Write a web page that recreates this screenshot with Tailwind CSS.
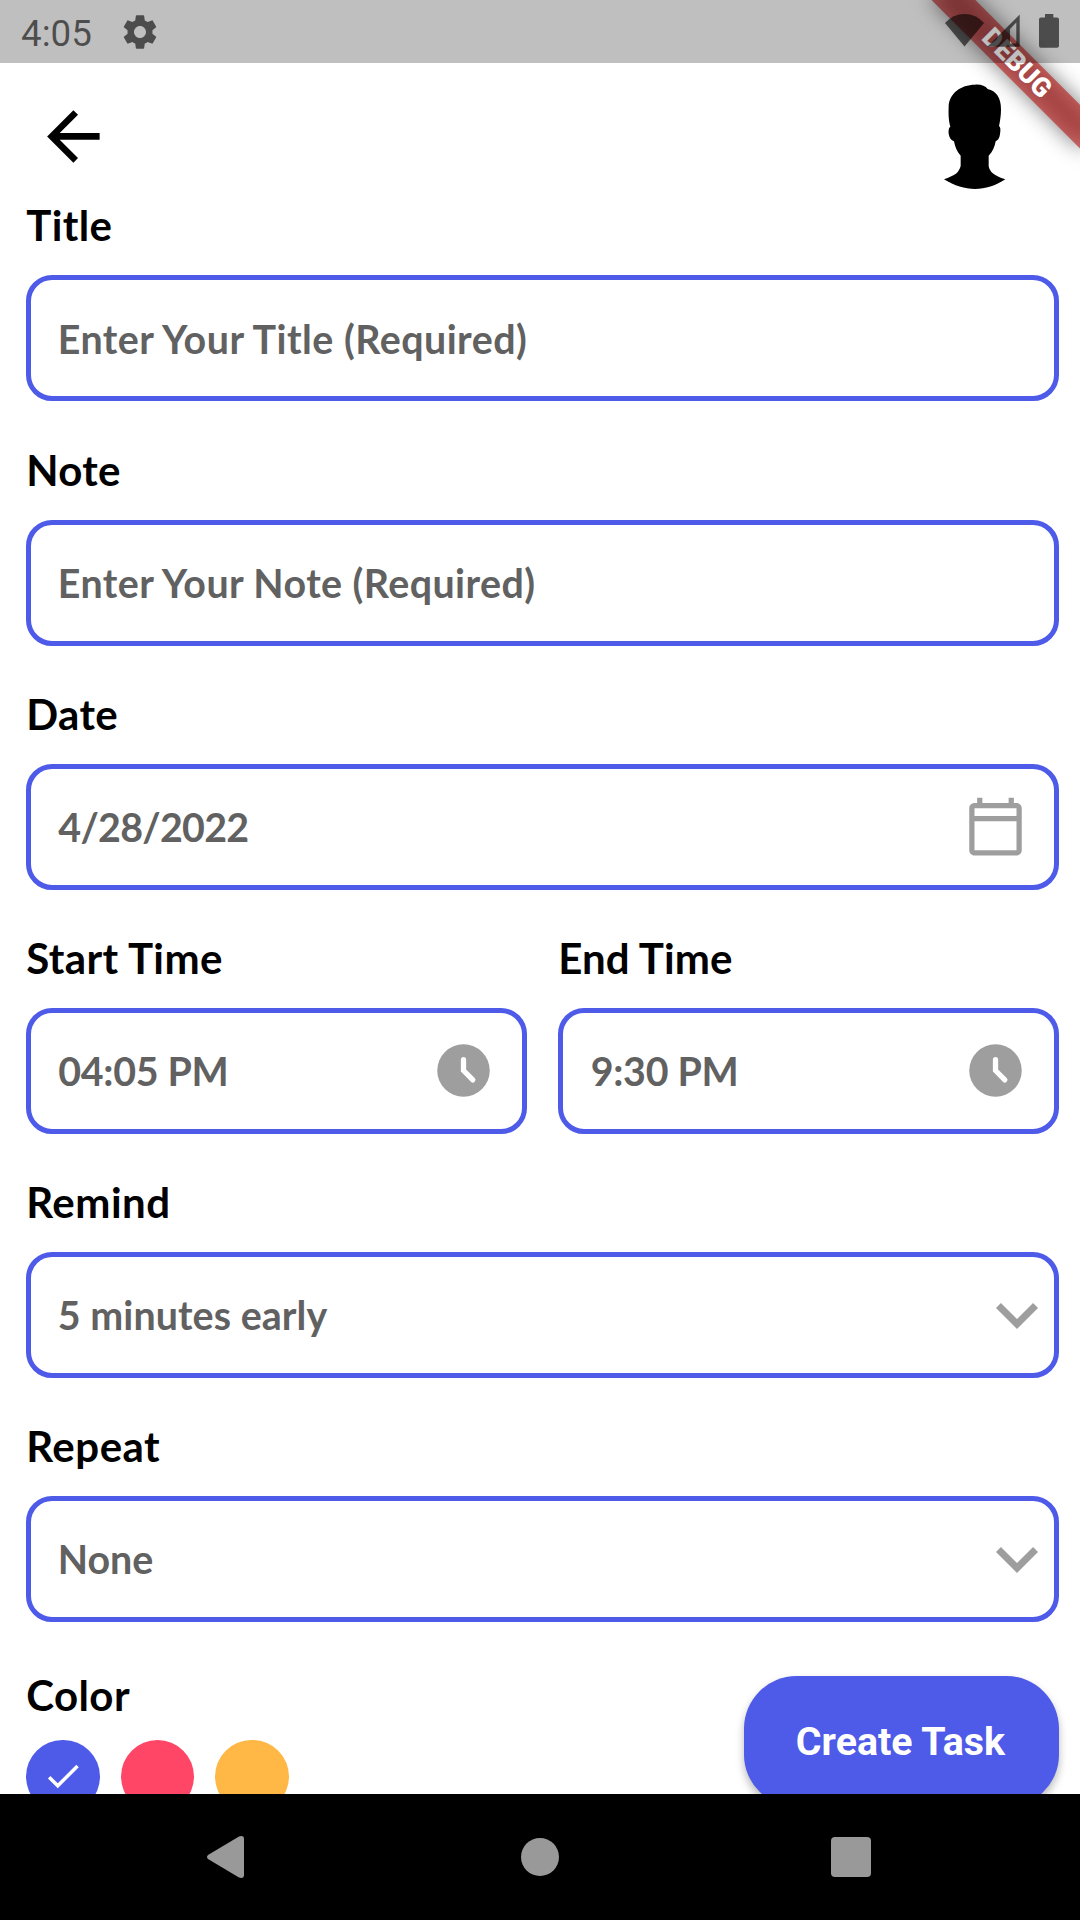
<!DOCTYPE html>
<html lang="en">
<head>
<meta charset="utf-8">
<title>Add Task</title>
<script src="https://cdn.jsdelivr.net/npm/@tailwindcss/browser@4"></script>
</head>
<body class="bg-white">
<div class="relative flex h-[1920px] w-[1080px] flex-col overflow-hidden bg-white font-['Lato',sans-serif] font-bold text-black">

  <!-- Status bar: translucent, so it sits above the debug ribbon -->
  <header class="relative z-20 flex h-[63px] shrink-0 items-center bg-black/25 pl-[21px] pr-[21px]">
    <span class="w-[99px] font-['Roboto',sans-serif] text-[36.75px] leading-[43px] font-normal text-black/60 pt-[3px]">4:05</span>
    <svg class="size-[40px]" viewBox="0 0 24 24" fill="#000" fill-opacity=".6"><path d="M19.43 12.98c.04-.32.07-.64.07-.98s-.03-.66-.07-.98l2.11-1.65c.19-.15.24-.42.12-.64l-2-3.46c-.12-.22-.39-.3-.61-.22l-2.49 1c-.52-.4-1.08-.73-1.69-.98l-.38-2.65C14.46 2.18 14.25 2 14 2h-4c-.25 0-.46.18-.49.42l-.38 2.65c-.61.25-1.17.59-1.69.98l-2.49-1c-.23-.09-.49 0-.61.22l-2 3.46c-.13.22-.07.49.12.64l2.11 1.65c-.04.32-.07.65-.07.98s.03.66.07.98l-2.11 1.65c-.19.15-.24.42-.12.64l2 3.46c.12.22.39.3.61.22l2.49-1c.52.4 1.08.73 1.69.98l.38 2.65c.03.24.24.42.49.42h4c.25 0 .46-.18.49-.42l.38-2.65c.61-.25 1.17-.59 1.69-.98l2.49 1c.23.09.49 0 .61-.22l2-3.46c.12-.22.07-.49-.12-.64l-2.11-1.65zM12 15.6c-1.98 0-3.6-1.62-3.6-3.6s1.62-3.6 3.6-3.6 3.6 1.62 3.6 3.6-1.62 3.6-3.6 3.6z"/></svg>
    <svg class="ml-auto h-[63px] w-[114px]" viewBox="945 0 114 63" fill="#000" fill-opacity=".6">
      <path d="M964.500 46.500L945 23Q953 14 964.500 14T984 23Z"/>
      <path fill-rule="evenodd" d="M987.300 46.700L1019.700 14.500V46.700ZM1010 29V43.500H1016.300V22.500Z"/>
      <path d="M1045 14h8.300v3.500h3.700q2 0 2 2v26.300q0 2-2 2h-16q-2 0-2-2V19.500q0-2 2-2h4z"/>
    </svg>
  </header>

  <!-- App bar -->
  <div class="flex h-[136.500px] shrink-0 items-start justify-between pt-[21px] pl-[33.700px] pr-[74px]">
    <svg class="mt-[13px] size-[78.750px]" viewBox="0 0 24 24"><path d="M20 11H7.830l5.590-5.590L12 4l-8 8 8 8 1.410-1.410L7.830 13H20v-2z"/></svg>
    <svg class="h-[106px] w-[62px]" viewBox="0 0 186 318"><path d="M93 2C112 1 124 6 131 15C156 20 172 42 171 77C171 95 168 110 165 127C170 129 170 139 168 151C166 163 162 169 155 172C152 188 146 203 134 215V246C137 264 150 275 184 286C154 306 125 315 93 315C62 315 32 306 0 286C32 274 44 268 50 246V215C39 203 33 188 30 172C21 168 16 162 14 149C13 139 14 131 19 128C14 110 13 92 14 65C17 28 50 2 93 2Z"/></svg>
  </div>

  <main class="flex min-h-0 flex-1 flex-col gap-[43.200px] overflow-hidden pl-[26.250px] pr-[21px]">
    <section class="flex shrink-0 flex-col gap-[24.925px]">
      <h2 class="text-[42px] leading-[51px] tracking-[0.4px]">Title</h2>
      <div class="flex h-[126px] items-center rounded-[26px] border-[5px] border-[#4e5ae8] px-[26.500px] text-[39.375px] tracking-[0.480px] text-[#616161]">Enter Your Title (Required)</div>
    </section>
    <section class="flex shrink-0 flex-col gap-[23.925px]">
      <h2 class="text-[42px] leading-[51px] tracking-[0.3px]">Note</h2>
      <div class="flex h-[126px] items-center rounded-[26px] border-[5px] border-[#4e5ae8] px-[26.500px] text-[39.375px] tracking-[0.440px] text-[#616161]">Enter Your Note (Required)</div>
    </section>
    <section class="flex shrink-0 flex-col gap-[23.925px]">
      <h2 class="text-[42px] leading-[51px] tracking-[0.4px]">Date</h2>
      <div class="flex h-[126px] items-center justify-between rounded-[26px] border-[5px] border-[#4e5ae8] pl-[27px] pr-[26.750px] text-[39.375px] tracking-[-0.700px] text-[#616161]">4/28/2022
        <svg class="size-[63px]" viewBox="0 0 24 24" fill="#9e9e9e"><path d="M20 3h-1V1h-2v2H7V1H5v2H4c-1.100 0-2 .9-2 2v16c0 1.100.9 2 2 2h16c1.100 0 2-.9 2-2V5c0-1.100-.9-2-2-2zm0 18H4V10h16v11zm0-13H4V5h16v3z"/></svg>
      </div>
    </section>
    <div class="grid shrink-0 grid-cols-2 gap-[31.250px]">
      <section class="flex flex-col gap-[23.925px]">
        <h2 class="text-[42px] leading-[51px] tracking-[0.4px]">Start Time</h2>
        <div class="flex h-[126px] items-center justify-between rounded-[26px] border-[5px] border-[#4e5ae8] pl-[27px] pr-[27px] text-[39.375px] tracking-[-0.300px] text-[#616161]">04:05 PM
          <svg class="size-[63px]" viewBox="0 0 24 24"><circle cx="12" cy="12" r="10" fill="#9e9e9e"/><path d="M12 7.850V12L15.550 15.600" fill="none" stroke="#fff" stroke-width="2" stroke-linecap="round"/></svg>
        </div>
      </section>
      <section class="flex flex-col gap-[23.925px]">
        <h2 class="text-[42px] leading-[51px] tracking-[0.1px]">End Time</h2>
        <div class="flex h-[126px] items-center justify-between rounded-[26px] border-[5px] border-[#4e5ae8] pl-[27.500px] pr-[26.750px] text-[39.375px] tracking-[-0.300px] text-[#616161]">9:30 PM
          <svg class="size-[63px]" viewBox="0 0 24 24"><circle cx="12" cy="12" r="10" fill="#9e9e9e"/><path d="M12 7.850V12L15.550 15.600" fill="none" stroke="#fff" stroke-width="2" stroke-linecap="round"/></svg>
        </div>
      </section>
    </div>
    <section class="flex shrink-0 flex-col gap-[23.925px]">
      <h2 class="text-[42px] leading-[51px] tracking-[0.5px]">Remind</h2>
      <div class="flex h-[126px] items-center justify-between rounded-[26px] border-[5px] border-[#4e5ae8] pl-[26.500px] text-[39.375px] tracking-[0.080px] text-[#616161]">5 minutes early
        <svg class="-mr-[5px] size-[84px]" viewBox="0 0 24 24" fill="#9e9e9e"><path d="M7.410 8.590L12 13.170l4.590-4.580L18 10l-6 6-6-6z"/></svg>
      </div>
    </section>
    <section class="flex shrink-0 flex-col gap-[23.925px]">
      <h2 class="text-[42px] leading-[51px] tracking-[0.5px]">Repeat</h2>
      <div class="flex h-[126px] items-center justify-between rounded-[26px] border-[5px] border-[#4e5ae8] pl-[26.500px] text-[39.375px] text-[#616161]">None
        <svg class="-mr-[5px] size-[84px]" viewBox="0 0 24 24" fill="#9e9e9e"><path d="M7.410 8.590L12 13.170l4.590-4.580L18 10l-6 6-6-6z"/></svg>
      </div>
    </section>
    <div class="flex shrink-0 items-start justify-between pt-[4.500px]">
      <section class="flex flex-col gap-[19px]">
        <h2 class="text-[42px] leading-[51px] tracking-[0.4px]">Color</h2>
        <div class="flex gap-[21px]">
          <span class="flex size-[73.500px] items-center justify-center rounded-full bg-[#4e5ae8]"><svg class="size-[42px]" viewBox="0 0 24 24" fill="#fff"><path d="M9 16.200L4.800 12l-1.400 1.400L9 19 21 7l-1.400-1.400L9 16.200z"/></svg></span>
          <span class="size-[73.500px] rounded-full bg-[#ff4667]"></span>
          <span class="size-[73.500px] rounded-full bg-[#ffb746]"></span>
        </div>
      </section>
      <button class="mt-[6px] h-[131.250px] w-[315px] rounded-[52.500px] bg-[#4e5ae8] pr-[2px] font-['Roboto',sans-serif] text-[39.375px] font-bold text-white shadow-[0_5px_8px_rgba(0,0,0,0.28)]">Create Task</button>
    </div>
  </main>

  <!-- Navigation bar -->
  <nav class="z-10 flex h-[126px] shrink-0 items-center justify-between bg-black pl-[206px] pr-[209px]">
    <svg class="h-[44px] w-[38px]" viewBox="0 0 38 44" fill="#999"><path d="M2 20L33 1.500Q38 0 38 4V40Q38 44 33 42.500L2 24Q0 22 2 20Z"/></svg>
    <span class="ml-[4px] size-[38px] rounded-full bg-[#999]"></span>
    <span class="size-[40px] rounded-[4px] bg-[#999]"></span>
  </nav>

  <!-- Debug ribbon, rotated about the top right corner -->
  <div class="absolute top-0 left-[1080px] z-10 size-0 origin-top-left rotate-45">
    <div class="absolute top-[73.500px] -left-[105px] h-[31.500px] w-[210px] bg-black/50 blur-[10.400px]"></div>
    <div class="absolute top-[73.500px] -left-[105px] flex h-[31.500px] w-[210px] items-center justify-center bg-[#b71c1c]/63 font-['Roboto',sans-serif] text-[26.775px] leading-none font-black text-white">DEBUG</div>
  </div>
</div>
</body>
</html>
